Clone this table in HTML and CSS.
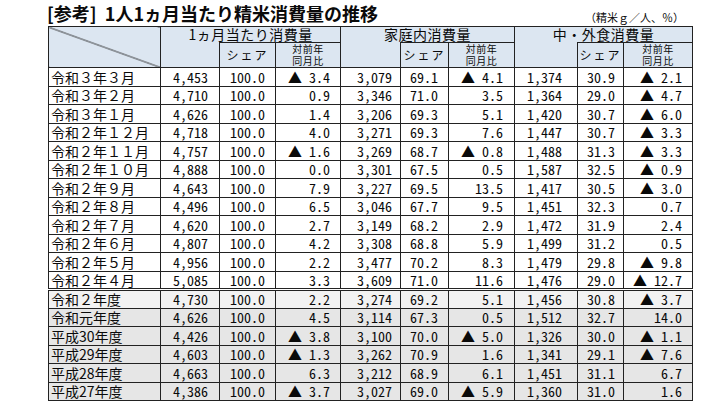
FILE: index.html
```html
<!DOCTYPE html>
<html lang="ja">
<head>
<meta charset="utf-8">
<link rel="stylesheet" href="styles.css">
</head>
<body>
<div class="page">
  <div class="head">
    <div class="title">[参考]&nbsp;&nbsp;1人1ヵ月当たり精米消費量の推移</div>
    <div class="unit">（精米ｇ／人、％）</div>
  </div>
  <table class="tbl">
    <colgroup>
      <col class="c-lab"><col class="c-t1"><col class="c-s1"><col class="c-y1">
      <col class="c-t2"><col class="c-s2"><col class="c-y2">
      <col class="c-t3"><col class="c-s3"><col class="c-y3">
    </colgroup>
    <thead>
      <tr class="h1">
        <th class="diag" rowspan="2"></th>
        <th class="grp" colspan="3">1ヵ月当たり消費量</th>
        <th class="grp" colspan="3">家庭内消費量</th>
        <th class="grp" colspan="3">中・外食消費量</th>
      </tr>
      <tr class="h2">
        <th class="tot"></th><th class="sub">シェア</th><th class="yoy">対前年<br>同月比</th>
        <th class="tot"></th><th class="sub">シェア</th><th class="yoy">対前年<br>同月比</th>
        <th class="tot"></th><th class="sub">シェア</th><th class="yoy">対前年<br>同月比</th>
      </tr>
    </thead>
    <tbody>
      <tr><td class="lab">令和３年３月</td><td class="n t1">4,453</td><td class="n s1">100.0</td><td class="n y1">▲ 3.4</td><td class="n t2">3,079</td><td class="n s2">69.1</td><td class="n y2">▲ 4.1</td><td class="n t3">1,374</td><td class="n s3">30.9</td><td class="n y3">▲ 2.1</td></tr>
      <tr><td class="lab">令和３年２月</td><td class="n t1">4,710</td><td class="n s1">100.0</td><td class="n y1">0.9</td><td class="n t2">3,346</td><td class="n s2">71.0</td><td class="n y2">3.5</td><td class="n t3">1,364</td><td class="n s3">29.0</td><td class="n y3">▲ 4.7</td></tr>
      <tr><td class="lab">令和３年１月</td><td class="n t1">4,626</td><td class="n s1">100.0</td><td class="n y1">1.4</td><td class="n t2">3,206</td><td class="n s2">69.3</td><td class="n y2">5.1</td><td class="n t3">1,420</td><td class="n s3">30.7</td><td class="n y3">▲ 6.0</td></tr>
      <tr><td class="lab">令和２年１２月</td><td class="n t1">4,718</td><td class="n s1">100.0</td><td class="n y1">4.0</td><td class="n t2">3,271</td><td class="n s2">69.3</td><td class="n y2">7.6</td><td class="n t3">1,447</td><td class="n s3">30.7</td><td class="n y3">▲ 3.3</td></tr>
      <tr><td class="lab">令和２年１１月</td><td class="n t1">4,757</td><td class="n s1">100.0</td><td class="n y1">▲ 1.6</td><td class="n t2">3,269</td><td class="n s2">68.7</td><td class="n y2">▲ 0.8</td><td class="n t3">1,488</td><td class="n s3">31.3</td><td class="n y3">▲ 3.3</td></tr>
      <tr><td class="lab">令和２年１０月</td><td class="n t1">4,888</td><td class="n s1">100.0</td><td class="n y1">0.0</td><td class="n t2">3,301</td><td class="n s2">67.5</td><td class="n y2">0.5</td><td class="n t3">1,587</td><td class="n s3">32.5</td><td class="n y3">▲ 0.9</td></tr>
      <tr><td class="lab">令和２年９月</td><td class="n t1">4,643</td><td class="n s1">100.0</td><td class="n y1">7.9</td><td class="n t2">3,227</td><td class="n s2">69.5</td><td class="n y2">13.5</td><td class="n t3">1,417</td><td class="n s3">30.5</td><td class="n y3">▲ 3.0</td></tr>
      <tr><td class="lab">令和２年８月</td><td class="n t1">4,496</td><td class="n s1">100.0</td><td class="n y1">6.5</td><td class="n t2">3,046</td><td class="n s2">67.7</td><td class="n y2">9.5</td><td class="n t3">1,451</td><td class="n s3">32.3</td><td class="n y3">0.7</td></tr>
      <tr><td class="lab">令和２年７月</td><td class="n t1">4,620</td><td class="n s1">100.0</td><td class="n y1">2.7</td><td class="n t2">3,149</td><td class="n s2">68.2</td><td class="n y2">2.9</td><td class="n t3">1,472</td><td class="n s3">31.9</td><td class="n y3">2.4</td></tr>
      <tr><td class="lab">令和２年６月</td><td class="n t1">4,807</td><td class="n s1">100.0</td><td class="n y1">4.2</td><td class="n t2">3,308</td><td class="n s2">68.8</td><td class="n y2">5.9</td><td class="n t3">1,499</td><td class="n s3">31.2</td><td class="n y3">0.5</td></tr>
      <tr><td class="lab">令和２年５月</td><td class="n t1">4,956</td><td class="n s1">100.0</td><td class="n y1">2.2</td><td class="n t2">3,477</td><td class="n s2">70.2</td><td class="n y2">8.3</td><td class="n t3">1,479</td><td class="n s3">29.8</td><td class="n y3">▲ 9.8</td></tr>
      <tr><td class="lab">令和２年４月</td><td class="n t1">5,085</td><td class="n s1">100.0</td><td class="n y1">3.3</td><td class="n t2">3,609</td><td class="n s2">71.0</td><td class="n y2">11.6</td><td class="n t3">1,476</td><td class="n s3">29.0</td><td class="n y3">▲ 12.7</td></tr>
      <tr class="yr first"><td class="lab">令和２年度</td><td class="n t1">4,730</td><td class="n s1">100.0</td><td class="n y1">2.2</td><td class="n t2">3,274</td><td class="n s2">69.2</td><td class="n y2">5.1</td><td class="n t3">1,456</td><td class="n s3">30.8</td><td class="n y3">▲ 3.7</td></tr>
      <tr class="yr"><td class="lab">令和元年度</td><td class="n t1">4,626</td><td class="n s1">100.0</td><td class="n y1">4.5</td><td class="n t2">3,114</td><td class="n s2">67.3</td><td class="n y2">0.5</td><td class="n t3">1,512</td><td class="n s3">32.7</td><td class="n y3">14.0</td></tr>
      <tr class="yr"><td class="lab">平成30年度</td><td class="n t1">4,426</td><td class="n s1">100.0</td><td class="n y1">▲ 3.8</td><td class="n t2">3,100</td><td class="n s2">70.0</td><td class="n y2">▲ 5.0</td><td class="n t3">1,326</td><td class="n s3">30.0</td><td class="n y3">▲ 1.1</td></tr>
      <tr class="yr"><td class="lab">平成29年度</td><td class="n t1">4,603</td><td class="n s1">100.0</td><td class="n y1">▲ 1.3</td><td class="n t2">3,262</td><td class="n s2">70.9</td><td class="n y2">1.6</td><td class="n t3">1,341</td><td class="n s3">29.1</td><td class="n y3">▲ 7.6</td></tr>
      <tr class="yr"><td class="lab">平成28年度</td><td class="n t1">4,663</td><td class="n s1">100.0</td><td class="n y1">6.3</td><td class="n t2">3,212</td><td class="n s2">68.9</td><td class="n y2">6.1</td><td class="n t3">1,451</td><td class="n s3">31.1</td><td class="n y3">6.7</td></tr>
      <tr class="yr"><td class="lab">平成27年度</td><td class="n t1">4,386</td><td class="n s1">100.0</td><td class="n y1">▲ 3.7</td><td class="n t2">3,027</td><td class="n s2">69.0</td><td class="n y2">▲ 5.9</td><td class="n t3">1,360</td><td class="n s3">31.0</td><td class="n y3">1.6</td></tr>
    </tbody>
  </table>
</div>
</body>
</html>
```

FILE: styles.css
```css
body {
  margin: 0;
  background: #ffffff;
  color: #0a0a0a;
  font-family: "Noto Sans CJK JP", sans-serif;
}

.page {
  width: 644px;
  margin-left: 48px;
}

.head {
  display: flex;
  justify-content: space-between;
  align-items: flex-end;
  height: 26px;
}

.title {
  font-size: 18px;
  font-weight: bold;
  line-height: 22px;
  padding-bottom: 2px;
  margin-left: -1px;
}

.unit {
  font-size: 11px;
  line-height: 13px;
  margin-right: 8px;
  margin-bottom: 2px;
}

.tbl {
  border-collapse: collapse;
  table-layout: fixed;
  width: 644px;
}

.c-lab { width: 112px; }
.c-t1 { width: 59px; }
.c-s1 { width: 56px; }
.c-y1 { width: 65px; }
.c-t2 { width: 60px; }
.c-s2 { width: 48px; }
.c-y2 { width: 66px; }
.c-t3 { width: 63px; }
.c-s3 { width: 46px; }
.c-y3 { width: 69px; }

.tbl th,
.tbl td {
  border: 1px solid #222222;
  padding: 0;
  white-space: nowrap;
}

.tbl th {
  background: #dce6f1;
  font-weight: normal;
}

.h1 { height: 16px; }
.h2 { height: 25px; }

.tbl th.diag {
  background: linear-gradient(to top right, #dce6f1 calc(50% - 0.8px), #222222 50%, #dce6f1 calc(50% + 0.8px));
}

.grp {
  font-size: 14px;
  line-height: 15px;
  letter-spacing: 0.5px;
  vertical-align: bottom;
}

.tbl th.grp { border-bottom: none; }
.tbl th.tot { border-top: none; }

.sub {
  font-size: 12px;
  letter-spacing: 2px;
  line-height: 14px;
}

.yoy {
  font-size: 10px;
  line-height: 12px;
  letter-spacing: 0.5px;
}

.tbl tbody tr { height: 18.5px; }

.lab {
  font-size: 14px;
  line-height: 16px;
}

.tbl td.lab { padding-left: 2px; }

.n {
  font-family: "Noto Sans Mono CJK JP", "DejaVu Sans Mono", monospace;
  font-size: 14px;
  line-height: 16px;
  text-align: right;
  white-space: pre;
}

.tbl td.t1 { padding-right: 11px; }
.tbl td.s1 { padding-right: 10px; }
.tbl td.y1 { padding-right: 10px; }
.tbl td.t2 { padding-right: 8px; }
.tbl td.s2 { padding-right: 10px; }
.tbl td.y2 { padding-right: 11px; }
.tbl td.t3 { padding-right: 15px; }
.tbl td.s3 { padding-right: 8px; }
.tbl td.y3 { padding-right: 10px; }

.yr td { background: #e6e6e6; }
.yr.first td { background: #f2f2f2; }
.tbl .yr.first td { border-top: 3px double #222222; }
```
